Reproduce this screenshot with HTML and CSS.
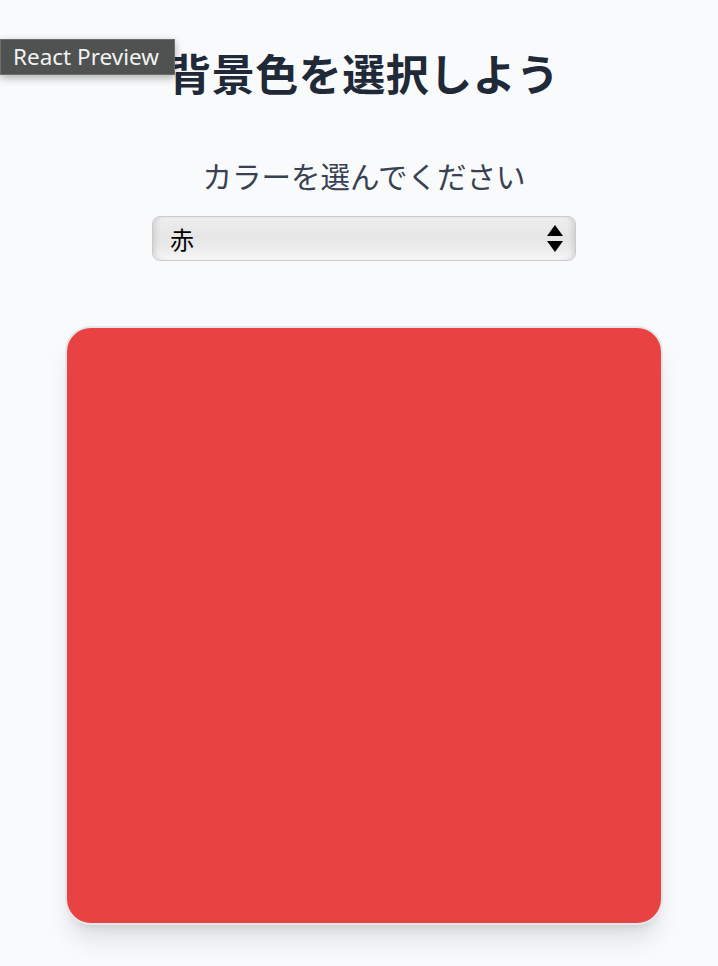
FILE: index.html
```html
<!DOCTYPE html>
<html lang="ja">
<head>
<meta charset="utf-8">
<title>背景色を選択しよう</title>
<link rel="stylesheet" href="styles.css">
</head>
<body>
<div class="badge">React Preview</div>
<main class="page">
  <h1 class="title">背景色を選択しよう</h1>
  <label class="label" for="color">カラーを選んでください</label>
  <div class="select-wrap">
    <select id="color" class="select">
      <option>赤</option>
      <option>青</option>
      <option>緑</option>
      <option>黄</option>
    </select>
    <svg class="arrows" width="16" height="28" viewBox="0 0 16 28" aria-hidden="true">
      <polygon points="8,0 16,11 0,11" fill="#000"/>
      <polygon points="0,16 16,16 8,27" fill="#000"/>
    </svg>
  </div>
  <div class="swatch"></div>
</main>
</body>
</html>
```
FILE: styles.css
```css
html, body {
  margin: 0;
  padding: 0;
  background: #f9fafb;
}
body {
  font-family: "Noto Sans CJK JP", "Noto Sans", sans-serif;
  min-height: 966px;
}
.page {
  box-sizing: border-box;
  width: 718px;
  padding: 44px 0 0 10px;
  display: flex;
  flex-direction: column;
  align-items: center;
}
.title {
  margin: 0;
  font-size: 43px;
  line-height: 56px;
  font-weight: 600;
  color: #1f2937;
  letter-spacing: 0.5px;
}
.label {
  margin-top: 55px;
  font-size: 29.5px;
  line-height: 40px;
  color: #374151;
  font-weight: 400;
}
.select-wrap {
  position: relative;
  margin-top: 21px;
  width: 424px;
  height: 45px;
}
.select {
  appearance: none;
  -webkit-appearance: none;
  box-sizing: border-box;
  width: 424px;
  height: 45px;
  margin: 0;
  padding: 0 0 0 17px;
  border: 1px solid #c9cbcf;
  border-radius: 8px;
  background: linear-gradient(#eeeeee 0%, #e6e6e6 45%, #ececec 75%, #f7f7f7 100%);
  box-shadow: inset 6px 0 6px -4px rgba(0,0,0,0.12), inset -6px 0 6px -4px rgba(0,0,0,0.12);
  font-family: "Noto Sans CJK JP", sans-serif;
  font-size: 24px;
  color: #000;
  outline: none;
}
.arrows {
  position: absolute;
  right: 13px;
  top: 9px;
  pointer-events: none;
}
.swatch {
  box-sizing: border-box;
  margin-top: 65px;
  width: 598px;
  height: 599px;
  border: 2px solid #e5e7eb;
  border-radius: 26px;
  background: #e84342;
  box-shadow: 0 20px 25px -5px rgba(0,0,0,0.1), 0 8px 10px -6px rgba(0,0,0,0.1);
}
.badge {
  position: absolute;
  left: 0;
  top: 39px;
  box-sizing: border-box;
  width: 175px;
  height: 36px;
  padding-left: 12px;
  background: #4f5251;
  border: 1px solid #6b6e6d;
  color: #f2f2f2;
  font-family: "Noto Sans", sans-serif;
  font-size: 22.5px;
  line-height: 34px;
  box-shadow: 0 3px 8px rgba(0,0,0,0.3);
  z-index: 10;
}
```
